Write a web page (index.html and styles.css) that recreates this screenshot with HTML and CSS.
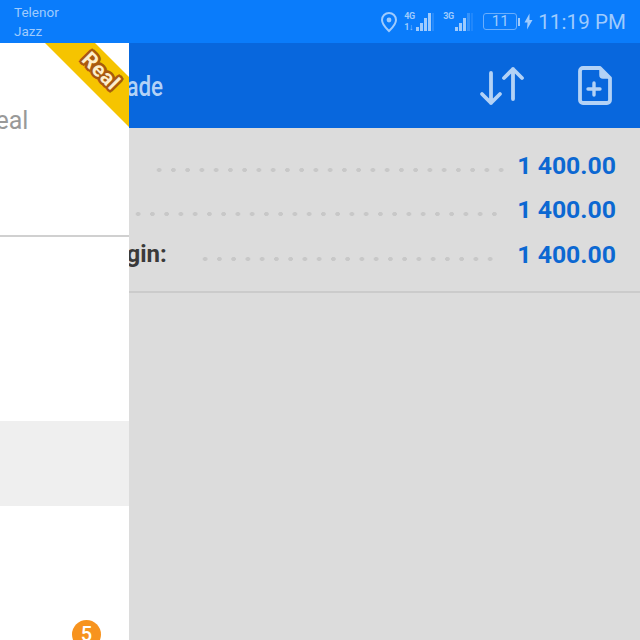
FILE: index.html
```html
<!DOCTYPE html>
<html lang="en">
<head>
    <meta charset="UTF-8">
    <meta name="viewport" content="width=device-width, initial-scale=1.0">
    <title>Trade</title>
    <link rel="stylesheet" href="styles.css">
</head>
<body>
    <div class="phone">
        <!-- Barra de estado -->
        <div class="status-bar">
            <div class="carriers">
                <span>Telenor</span>
                <span>Jazz</span>
            </div>
            <div class="status-icons">
                <svg class="icon-pin" width="18" height="22" viewBox="0 0 18 22">
                    <path d="M9 2a7 7 0 0 0-7 7c0 4.6 4.600 8.600 7 11 2.400-2.400 7-6.400 7-11a7 7 0 0 0-7-7z" fill="none" stroke="currentColor" stroke-width="2"/>
                    <circle cx="9" cy="9" r="2.400" fill="currentColor"/>
                </svg>
                <div class="signal">
                    <div class="signal-labels"><span>4G</span><span>1↓</span></div>
                    <svg width="18" height="20" viewBox="0 0 18 20">
                        <rect x="0" y="15" width="3" height="4" fill="currentColor"/>
                        <rect x="4" y="11" width="3" height="8" fill="currentColor"/>
                        <rect x="8" y="6" width="3" height="13" fill="currentColor"/>
                        <rect x="12" y="1" width="3" height="18" fill="currentColor"/>
                        <rect x="16.500" y="1" width="1" height="18" fill="currentColor" opacity="0.4"/>
                    </svg>
                </div>
                <div class="signal">
                    <div class="signal-labels"><span>3G</span><span>&nbsp;</span></div>
                    <svg width="18" height="20" viewBox="0 0 18 20">
                        <rect x="0" y="15" width="3" height="4" fill="currentColor"/>
                        <rect x="4" y="11" width="3" height="8" fill="currentColor"/>
                        <rect x="8" y="6" width="3" height="13" fill="currentColor"/>
                        <rect x="12" y="1" width="3" height="18" fill="currentColor" opacity="0.3"/>
                        <rect x="16.500" y="1" width="1" height="18" fill="currentColor" opacity="0.3"/>
                    </svg>
                </div>
                <div class="battery"><span class="battery-level">11</span><span class="battery-tip"></span></div>
                <svg width="9" height="17" viewBox="0 0 9 16">
                    <path d="M5.500 0 0.500 9h3l-.5 7 5.500-9.500h-3z" fill="currentColor"/>
                </svg>
                <span class="clock">11:19 PM</span>
            </div>
        </div>

        <!-- Barra de la app -->
        <div class="app-bar">
            <span class="app-title">Trade</span>
            <div class="app-actions">
                <svg width="46" height="40" viewBox="0 0 46 40" fill="none" stroke="currentColor" stroke-width="3.800" stroke-linecap="round" stroke-linejoin="round">
                    <path d="M12 7v30M3 28l9 9 9-9"/>
                    <path d="M34 3v30M25 12l9-9 9 9"/>
                </svg>
                <svg width="34" height="40" viewBox="0 0 34 40" fill="none" stroke="currentColor" stroke-width="3.800" stroke-linecap="round" stroke-linejoin="round">
                    <path d="M5 2h17l10 10v22a3 3 0 0 1-3 3H5a3 3 0 0 1-3-3V5a3 3 0 0 1 3-3z"/>
                    <path d="M22 2v7a3 3 0 0 0 3 3h7z" fill="currentColor" stroke-width="1.500"/>
                    <path d="M16 17v12M10 23h12" stroke-width="3.400"/>
                </svg>
            </div>
        </div>

        <!-- Resumen de la cuenta -->
        <div class="summary">
            <div class="summary-row row-balance">
                <span class="summary-label">Balance:</span>
                <span class="dots"></span>
                <span class="summary-value">1 400.00</span>
            </div>
            <div class="summary-row row-equity">
                <span class="summary-label">Equity:</span>
                <span class="dots"></span>
                <span class="summary-value">1 400.00</span>
            </div>
            <div class="summary-row row-margin">
                <span class="summary-label">Free margin:</span>
                <span class="dots"></span>
                <span class="summary-value">1 400.00</span>
            </div>
        </div>

        <!-- Menu lateral -->
        <div class="drawer">
            <div class="drawer-header">
                <span class="account-type">Real</span>
            </div>
            <div class="drawer-item item-plain"></div>
            <div class="drawer-item item-active"></div>
            <div class="drawer-item item-last">
                <span class="badge">5</span>
            </div>
            <div class="ribbon"></div>
            <span class="ribbon-text">Real</span>
        </div>
    </div>
</body>
</html>
```

FILE: styles.css
```css
* {
  box-sizing: border-box;
}
body {
  margin: 0;
  padding: 0;
  font-family: Roboto, "Liberation Sans", sans-serif;
}
.phone {
  position: relative;
  width: 640px;
  height: 640px;
  overflow: hidden;
  background-color: #dcdcdc;
}
/*Barra de estado*/
.status-bar {
  display: flex;
  justify-content: space-between;
  align-items: center;
  height: 43px;
  padding: 0 14px;
  background-color: #0a7cfb;
  color: #9fcbfd;
}
.carriers {
  display: flex;
  flex-direction: column;
  gap: 3px;
  font-size: 13.500px;
  line-height: 16px;
}
.status-icons {
  display: flex;
  align-items: center;
}
.icon-pin {
  margin-right: 6px;
}
.signal {
  display: flex;
  align-items: center;
  margin-right: 9px;
}
.signal-labels {
  display: flex;
  flex-direction: column;
  gap: 2px;
  width: 12px;
  font-size: 9px;
  line-height: 9px;
  font-weight: 700;
  letter-spacing: -0.5px;
}
.battery {
  display: flex;
  align-items: center;
  margin-left: 1px;
}
.battery-level {
  width: 34px;
  height: 17px;
  border: 1px solid #6aaefc;
  border-radius: 3px;
  text-align: center;
  font-size: 15px;
  line-height: 15px;
}
.battery-tip {
  width: 2px;
  height: 8px;
  margin: 0 4px 0 1px;
  background-color: #9fcbfd;
}
.clock {
  margin-left: 5px;
  font-size: 20.500px;
  letter-spacing: 0.1px;
}
/*Barra de la app*/
.app-bar {
  display: flex;
  justify-content: space-between;
  align-items: center;
  height: 85px;
  padding: 0 28px 0 106px;
  background-color: #0867dd;
  color: #b3d2f6;
}
.app-title {
  display: inline-block;
  margin-top: 2px;
  font-size: 28px;
  font-weight: 500;
  transform: scaleX(0.8);
  transform-origin: left center;
}
.app-actions {
  display: flex;
  align-items: center;
  gap: 53px;
}
/*Resumen*/
.summary {
  display: flex;
  flex-direction: column;
  height: 165px;
  padding-top: 15px;
  border-bottom: 2px solid #cbcbcb;
}
.summary-row {
  display: flex;
  align-items: center;
  height: 44.500px;
  padding-right: 24px;
}
.summary-label {
  font-size: 24px;
  font-weight: 700;
  color: #3a3a3a;
}
.dots {
  flex: 1;
  height: 6px;
  margin: 9px 15px 0 35px;
  background-image: radial-gradient(circle, #c8c8c8 2px, transparent 2.500px);
  background-size: 14.250px 6px;
  background-repeat: repeat-x;
}
.summary-value {
  font-size: 24.800px;
  font-weight: 700;
  color: #0c68d2;
}
.row-balance .summary-label {
  margin-left: 24px;
}
.row-balance .dots {
  margin-right: 12px;
}
.row-equity .summary-label {
  margin-left: 22px;
}
.row-equity .dots {
  margin-right: 18px;
}
.row-margin .summary-label {
  margin-left: 31px;
}
.row-margin .dots {
  margin-left: 31px;
  margin-right: 22px;
}
/*Menu lateral*/
.drawer {
  position: absolute;
  top: 43px;
  left: 0;
  bottom: 0;
  width: 129px;
  overflow: hidden;
  background-color: #ffffff;
}
.drawer-header {
  height: 194px;
  padding-top: 61px;
  border-bottom: 2px solid #d0d0d0;
}
.account-type {
  display: block;
  margin-left: -20px;
  font-size: 25px;
  line-height: 34px;
  color: #999999;
}
.item-plain {
  height: 184px;
}
.item-active {
  height: 85px;
  background-color: #efefef;
}
.item-last {
  position: relative;
  height: 134px;
}
.badge {
  position: absolute;
  top: 114px;
  left: 72px;
  width: 29px;
  height: 29px;
  border-radius: 50%;
  background-color: #f7931e;
  color: #ffffff;
  font-size: 20px;
  font-weight: 500;
  line-height: 29px;
  text-align: center;
}
.ribbon {
  position: absolute;
  top: 0;
  left: 45px;
  width: 84px;
  height: 84px;
  background-color: #f6c400;
  clip-path: polygon(0 0, 50px 0, 84px 34px, 84px 84px);
}
.ribbon-text {
  position: absolute;
  top: 15px;
  left: 79px;
  color: #fdeecb;
  font-size: 21px;
  font-weight: 700;
  line-height: 26px;
  letter-spacing: 0.5px;
  transform: rotate(45deg);
  text-shadow: 2.500px 0 0 #a9590f, -2.500px 0 0 #a9590f, 0 2.500px 0 #a9590f, 0 -2.500px 0 #a9590f, 2px 2px 0 #a9590f, -2px 2px 0 #a9590f, 2px -2px 0 #a9590f, -2px -2px 0 #a9590f;
}
```
